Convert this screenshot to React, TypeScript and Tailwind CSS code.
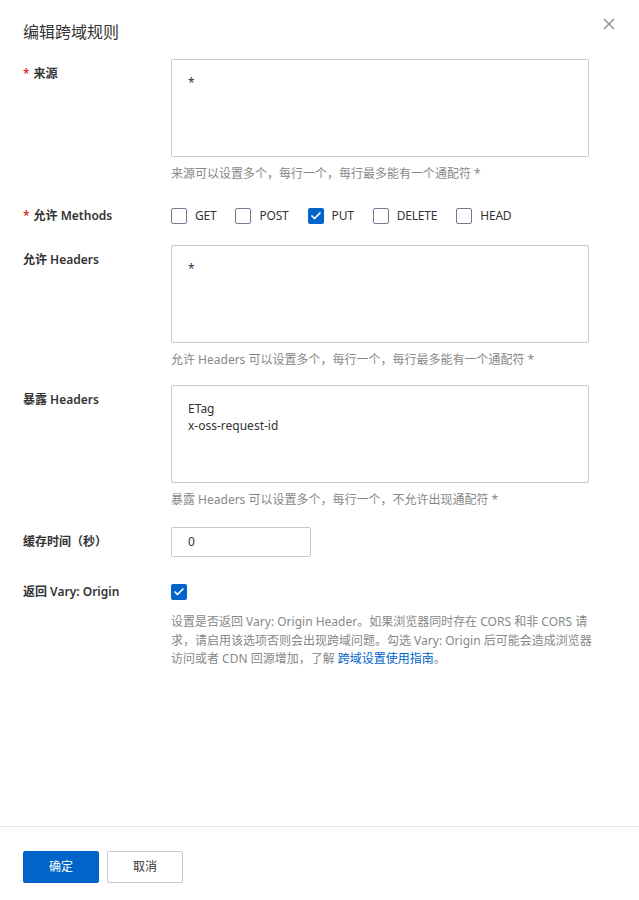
import { Check } from "lucide-react";

const font = {
  fontFamily: '"Noto Sans", "Noto Sans CJK SC", sans-serif',
};

function Box({ checked }: { checked?: boolean }) {
  return checked ? (
    <span className="flex h-4 w-4 shrink-0 items-center justify-center rounded-[2px] bg-[#0064c8]">
      <Check size={12} strokeWidth={3.5} className="text-white" />
    </span>
  ) : (
    <span className="h-4 w-4 shrink-0 rounded-[2px] border border-[#6f7d94] bg-white" />
  );
}

function Label({ text, required, top }: { text: string; required?: boolean; top?: boolean }) {
  return (
    <div
      className={`w-[148px] shrink-0 text-[12px] leading-[18px] font-semibold text-[#333] ${top ? "pt-[6px]" : ""}`}
    >
      {required && <span className="mr-1 text-[#d93026]">*</span>}
      {text}
    </div>
  );
}

function Area({ lines }: { lines: string[] }) {
  return (
    <div className="h-[98px] w-[418px] rounded-[2px] border border-[#c4c9d1] bg-white px-4 pt-[14px] text-[12px] leading-[17px] text-[#333]">
      {lines.map((l) => (
        <div key={l}>{l}</div>
      ))}
    </div>
  );
}

function Help({ children }: { children: React.ReactNode }) {
  return <div className="mt-2 text-[12px] leading-[18px] text-[#888]">{children}</div>;
}

const methods = ["GET", "POST", "PUT", "DELETE", "HEAD"];

export default function App() {
  return (
    <div style={font} className="flex h-[900px] w-[639px] flex-col bg-white">
      {/* Header */}
      <div className="flex items-start justify-between pl-[23px] pr-[24px] pt-5">
        <span className="text-[16px] leading-6 text-[#333]">编辑跨域规则</span>
        <svg width="12" height="12" viewBox="0 0 12 12" className="mt-[-2px]">
          <path d="M1 1L11 11M11 1L1 11" stroke="#888" strokeWidth="1.3" />
        </svg>
      </div>

      {/* Body */}
      <div className="flex-1 pl-[23px] pt-[15px]">
        {/* 来源 */}
        <div className="flex">
          <Label text="来源" required top />
          <div>
            <Area lines={["*"]} />
            <Help>来源可以设置多个，每行一个，每行最多能有一个通配符 *</Help>
          </div>
        </div>

        {/* Methods */}
        <div className="mt-[25px] flex h-4 items-center">
          <Label text="允许 Methods" required />
          <div className="flex items-center gap-[19px]">
            {methods.map((m) => (
              <label key={m} className="flex items-center gap-2 text-[12px] tracking-[-0.2px] text-[#333]">
                <Box checked={m === "PUT"} />
                {m}
              </label>
            ))}
          </div>
        </div>

        {/* 允许 Headers */}
        <div className="mt-[21px] flex">
          <Label text="允许 Headers" top />
          <div>
            <Area lines={["*"]} />
            <Help>允许 Headers 可以设置多个，每行一个，每行最多能有一个通配符 *</Help>
          </div>
        </div>

        {/* 暴露 Headers */}
        <div className="mt-4 flex">
          <Label text="暴露 Headers" top />
          <div>
            <Area lines={["ETag", "x-oss-request-id"]} />
            <Help>暴露 Headers 可以设置多个，每行一个，不允许出现通配符 *</Help>
          </div>
        </div>

        {/* 缓存时间 */}
        <div className="mt-[18px] flex items-center">
          <Label text="缓存时间（秒）" />
          <div className="flex h-[30px] w-[140px] items-center rounded-[2px] border border-[#c4c9d1] px-4 text-[12px] text-[#333]">
            0
          </div>
        </div>

        {/* Vary */}
        <div className="mt-[26px] flex">
          <Label text="返回 Vary: Origin" />
          <div className="pt-[1px]">
            <Box checked />
            <div className="mt-[13px] w-[430px] text-[12px] leading-[18.5px] text-[#888]">
              设置是否返回 Vary: Origin Header。如果浏览器同时存在 CORS 和非 CORS 请
              <br />
              求，请启用该选项否则会出现跨域问题。勾选 Vary: Origin 后可能会造成浏览器
              <br />
              访问或者 CDN 回源增加，了解 <span className="text-[#0064c8]">跨域设置使用指南</span>。
            </div>
          </div>
        </div>
      </div>

      {/* Footer */}
      <div className="flex h-[74px] gap-2 border-t border-[#e3e3e3] pl-[23px] pt-6">
        <button className="h-8 w-[76px] rounded-[2px] bg-[#0064c8] text-[12px] text-white">确定</button>
        <button className="h-8 w-[76px] rounded-[2px] border border-[#c4c9d1] bg-white text-[12px] text-[#333]">
          取消
        </button>
      </div>
    </div>
  );
}
